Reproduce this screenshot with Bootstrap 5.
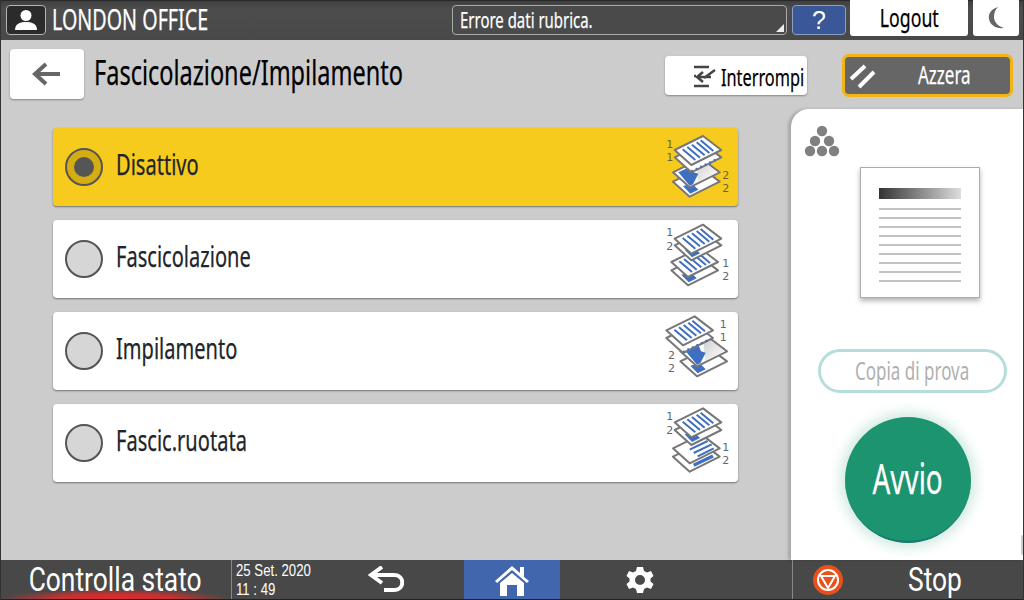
<!DOCTYPE html>
<html lang="it">
<head>
<meta charset="UTF-8">
<title>Fascicolazione/Impilamento</title>
<link href="https://cdn.jsdelivr.net/npm/bootstrap@5.3.0/dist/css/bootstrap.min.css" rel="stylesheet">
<style>
    html, body { margin: 0; background: #ccc; }
    body { font-family: "Noto Sans", "Liberation Sans", sans-serif; color: #000; }
    .screen { width: 1024px; height: 600px; overflow: hidden; background: #ccc; position: relative; }
    .screen::after { content: ""; position: absolute; inset: 0; pointer-events: none; box-shadow: inset 1px 0 #333, inset -1px 0 #333; }
    /* the printer panel font is a condensed face, squeeze Noto Sans to get there */
    .squeeze { display: inline-block; white-space: nowrap; transform: translateY(-1px) scaleX(.68); transform-origin: left center; line-height: 1; -webkit-text-stroke: .25px currentColor; }
    .squeeze-c { transform-origin: center center; }

    .top-bar { height: 40px; background: linear-gradient(#3f3f3f, #4d4d4d 20%, #484848); border-top: 1px solid #2a2a2a; padding-left: 6px; }
    .user-box { width: 40px; height: 30px; margin-top: 4px; background: #2b2b2b; border: 1px solid #b5b5b5; border-radius: 4px; }
    .office-name { width: 406px; padding-left: 6px; margin-top: 4px; font-size: 29px; color: #fff; }
    .msg-box { width: 335px; height: 30px; margin-top: 4px; background: #4a4a4a; border: 1px solid #aaa; border-radius: 4px; color: #fff; font-size: 22px; padding-left: 7px; position: relative; }
    .msg-corner { position: absolute; right: 2px; bottom: 2px; width: 0; height: 0; border-style: solid; border-width: 0 0 8px 8px; border-color: transparent transparent #eee transparent; }
    .help-box { width: 54px; height: 30px; margin: 4px 0 0 5px; background: #3a5797; border: 1px solid #8d9dbf; border-radius: 4px; color: #fff; font-family: "Liberation Sans", sans-serif; font-size: 25px; line-height: 28px; text-align: center; }
    .logout-box { width: 118px; height: 36px; margin-left: 4px; margin-top: -1px; background: #fff; border-radius: 0 0 3px 3px; font-size: 26px; }
    .moon-box { width: 46px; height: 36px; margin-left: 5px; margin-top: -1px; background: #fff; border-radius: 0 0 3px 3px; }

    .head-row { height: 69px; padding-left: 10px; position: relative; }
    .back-btn { width: 74px; height: 50px; margin-top: 9px; background: #fff; border-radius: 4px; box-shadow: 0 1px 2px rgba(0,0,0,.35); }
    .page-title { width: 400px; margin: 7px 0 0 10px; font-size: 34.6px; }
    .stop-job { width: 142px; height: 39px; margin-top: 16px; background: #fff; border-radius: 4px; box-shadow: 0 1px 2px rgba(0,0,0,.35); font-size: 24px; position: absolute; left: 665px; }
    .stop-job .squeeze { transform: translateY(1px) scaleX(.68); }
    .stop-icon { margin-left: 28px; }
    .reset-btn { width: 171px; height: 43px; margin-top: 14px; background: #666; border: 3px solid #f2b416; border-radius: 7px; color: #fff; font-size: 25px; position: absolute; left: 842px; }
    .reset-label { margin-left: 41px; }

    .body-row { height: 451px; }
    .option-col { width: 791px; padding: 19px 53px 0 53px; }
    .option-list { gap: 14px; }
    .option-row { height: 78px; background: #fff; border: 0; border-radius: 4px !important; box-shadow: 0 1px 2px rgba(0,0,0,.45); padding: 0 0 0 12px; font-size: 29.5px; }
    .option-row .squeeze { transform: translateY(-3px) scaleX(.68); }
    .option-row.picked { background: #f6cb1e; }
    .radio-dot { width: 38px; height: 38px; flex: none; margin-right: 13px; background: #d6d6d6; border: 2px solid #555; border-radius: 50%; }
    .picked .radio-dot { background: #d5ad12; }
    .radio-dot i { width: 20px; height: 20px; background: #555; border-radius: 50%; display: block; }
    .sheets { width: 75px; height: 78px; flex: none; }
    .sheets text { font-family: "DejaVu Sans", sans-serif; font-size: 33px; fill: #666; }
    .picked .sheets text { fill: #6f6430; }

    .side-panel { width: 233px; background: #fff; border-top-left-radius: 18px; box-shadow: -3px 0 3px rgba(0,0,0,.18); padding-top: 16px; }
    .toner { margin-left: 13px; display: block; }
    .paper { width: 120px; height: 131px; margin: 10px 0 0 69px; background: #fff; border: 1px solid #aaa; box-shadow: 0 3px 5px rgba(0,0,0,.3); padding: 20px 18px 0 18px; }
    .paper-band { height: 11px; background: linear-gradient(90deg, #333, #ddd); margin-bottom: 9px; }
    .paper-line { height: 2px; background: #c2c2c2; margin-bottom: 7px; }
    .trial-btn { width: 189px; height: 44px; margin: 51px 0 0 27px; border: 3px solid #b5dedb; border-radius: 22px; color: #b0b0b0; font-size: 25px; }
    .trial-btn .squeeze { -webkit-text-stroke: 0; }
    .start-btn { width: 126px; height: 126px; margin: 24px 0 0 54px; background: #1d9470; border-radius: 50%; border-bottom: 2px solid #177a70; box-shadow: 0 0 12px 5px rgba(29,148,112,.2); color: #fff; font-size: 41px; }
    .edge-notch { position: absolute; right: 0; top: 535px; width: 3px; height: 20px; background: #ccc; border-radius: 2px 0 0 2px; }

    .foot-bar { height: 40px; background: #484848; color: #fff; border-bottom: 1px solid #222; }
    .foot-bar .squeeze { -webkit-text-stroke: 0; }
    .foot-status { width: 231px; background: radial-gradient(ellipse 115px 10px at 50% 100%, #e5262b 0%, #c9302f 50%, rgba(72,72,72,0) 100%); }
    .foot-big { font-family: Roboto, "Noto Sans", sans-serif; font-size: 33px; }
    .foot-bar .foot-big .squeeze { transform: scaleX(.8); }
    .foot-date { width: 118px; padding-left: 4px; border-left: 1px solid #888; font-family: "Liberation Sans", sans-serif; font-size: 16.5px; }
    .foot-bar .foot-date span { height: 19px; line-height: 19px; transform: scaleX(.8); }
    .foot-back { width: 115px; padding-right: 42px; }
    .foot-home { width: 96px; background: #4166ad; }
    .foot-gear { width: 232px; padding-right: 72px; }
    .foot-stop { width: 232px; border-left: 1px solid #888; padding-left: 20px; }
    .stop-label { margin-left: 65px; }
</style>
</head>
<body>
<svg width="0" height="0" class="position-absolute">
    <defs>
        <linearGradient id="sheetShade" x1="0" y1="0" x2="1" y2="1">
            <stop offset="0" stop-color="#cfcfcf"/><stop offset="1" stop-color="#fff"/>
        </linearGradient>
        <!-- one sheet of paper in the stack icons, drawn at 3x -->
        <polygon id="sheetBase" points="0,42 85,0 140,42 50,87" fill="#fff" stroke="#777" stroke-width="6" stroke-linejoin="round"/>
        <g id="sheetLines">
            <use href="#sheetBase"/>
            <path d="M24,40 L62,72 M38,33 L76,65 M52,26 L90,58 M66,19 L104,51 M78,13 L116,45" stroke="#3f6fc0" stroke-width="6" fill="none"/>
        </g>
        <g id="sheetDots">
            <use href="#sheetBase"/>
            <path d="M50,84 L130,46" stroke="#3f6fc0" stroke-width="7" stroke-dasharray="5 10" fill="none"/>
        </g>
        <g id="sheetCorner">
            <use href="#sheetBase"/>
            <path d="M70,20 L85,5 L134,42 L74,70 Z" fill="url(#sheetShade)"/>
            <path d="M16,42 L55,24 L62,42 L76,46 L60,78 L50,82 Z" fill="#3f6fc0"/>
        </g>
        <g id="sheetLow">
            <use href="#sheetBase"/>
            <path d="M30,55 L52,78 L76,66 L58,48 Z" fill="#3f6fc0"/>
        </g>
        <g id="sheetTurned">
            <use href="#sheetBase"/>
            <path d="M50,46 L104,20 M62,56 L116,30 M74,66 L122,42" stroke="#3f6fc0" stroke-width="6" fill="none"/>
        </g>
        <g id="sheetTurnedLow">
            <use href="#sheetBase"/>
            <path d="M62,68 L120,40" stroke="#3f6fc0" stroke-width="10" fill="none"/>
        </g>
    </defs>
</svg>

<div class="screen">
    <div class="top-bar d-flex align-items-start">
        <div class="user-box d-flex align-items-center justify-content-center">
            <svg width="26" height="22" viewBox="0 0 26 22"><circle cx="13" cy="6.5" r="5.5" fill="#fff"/><path d="M2,21 C2,14 8,13 13,13 C18,13 24,14 24,21 Z" fill="#fff"/></svg>
        </div>
        <div class="office-name d-flex align-items-center"><span class="squeeze">LONDON OFFICE</span></div>
        <div class="msg-box d-flex align-items-center"><span class="squeeze">Errore dati rubrica.</span><span class="msg-corner"></span></div>
        <div class="help-box">?</div>
        <div class="logout-box d-flex align-items-center justify-content-center"><span class="squeeze squeeze-c">Logout</span></div>
        <div class="moon-box d-flex align-items-center justify-content-center">
            <svg width="20" height="26" viewBox="0 0 20 24"><path d="M12,1 C5,3 2,8 3,13 C4,19 10,23 18,22 C11,20 8,15 8,11 C8,7 9,4 12,1 Z" fill="#666"/></svg>
        </div>
    </div>

    <div class="head-row d-flex align-items-start">
        <div class="back-btn d-flex align-items-center justify-content-center">
            <svg width="30" height="24" viewBox="0 0 30 24"><path d="M28,12 H4 M14,2 L3,12 L14,22" stroke="#666" stroke-width="4" fill="none"/></svg>
        </div>
        <div class="page-title"><span class="squeeze">Fascicolazione/Impilamento</span></div>
        <div class="stop-job d-flex align-items-center">
            <svg class="stop-icon flex-shrink-0" width="24" height="24" viewBox="0 0 24 24"><path d="M1,3 H16 M1,22 H16 M1,12 H3" stroke="#444" stroke-width="2.5" fill="none"/><path d="M22,6 L11,14 M4,13 H18 M10,8 L4,13 L10,18" stroke="#444" stroke-width="2.5" fill="none"/></svg>
            <span class="squeeze ms-1">Interrompi</span>
        </div>
        <div class="reset-btn d-flex align-items-center">
            <svg class="ms-1 flex-shrink-0" width="28" height="26" viewBox="0 0 28 26"><path d="M2,16 L16,3 M10,24 L25,9" stroke="#fff" stroke-width="4" fill="none"/></svg>
            <span class="squeeze reset-label">Azzera</span>
        </div>
    </div>

    <div class="body-row d-flex">
        <div class="option-col">
            <div class="list-group option-list">
                <div class="list-group-item option-row picked d-flex align-items-center">
                    <span class="radio-dot d-flex align-items-center justify-content-center"><i></i></span>
                    <span class="squeeze flex-grow-1">Disattivo</span>
                    <svg class="sheets" viewBox="40 9 225 234">
                        <use href="#sheetLow" x="70" y="128"/><use href="#sheetCorner" x="70" y="100"/>
                        <use href="#sheetDots" x="75" y="55"/><use href="#sheetLines" x="75" y="33"/>
                        <text x="50" y="68">1</text><text x="50" y="108">1</text><text x="218" y="162">2</text><text x="218" y="202">2</text>
                    </svg>
                </div>
                <div class="list-group-item option-row d-flex align-items-center">
                    <span class="radio-dot"></span>
                    <span class="squeeze flex-grow-1">Fascicolazione</span>
                    <svg class="sheets" viewBox="40 9 225 234">
                        <use href="#sheetLow" x="65" y="118"/><use href="#sheetLines" x="65" y="93"/>
                        <use href="#sheetLow" x="75" y="43"/><use href="#sheetLines" x="75" y="23"/>
                        <text x="50" y="58">1</text><text x="50" y="98">2</text><text x="218" y="150">1</text><text x="218" y="190">2</text>
                    </svg>
                </div>
                <div class="list-group-item option-row d-flex align-items-center">
                    <span class="radio-dot"></span>
                    <span class="squeeze flex-grow-1">Impilamento</span>
                    <svg class="sheets" viewBox="40 9 225 234">
                        <use href="#sheetLow" x="92" y="115"/><use href="#sheetCorner" x="92" y="85"/>
                        <use href="#sheetDots" x="50" y="45"/><use href="#sheetLines" x="50" y="22"/>
                        <text x="210" y="56">1</text><text x="210" y="96">1</text><text x="55" y="150">2</text><text x="55" y="190">2</text>
                    </svg>
                </div>
                <div class="list-group-item option-row d-flex align-items-center">
                    <span class="radio-dot"></span>
                    <span class="squeeze flex-grow-1">Fascic.ruotata</span>
                    <svg class="sheets" viewBox="40 9 225 234">
                        <use href="#sheetTurnedLow" x="70" y="125"/><use href="#sheetTurned" x="70" y="100"/>
                        <use href="#sheetLow" x="75" y="45"/><use href="#sheetLines" x="75" y="22"/>
                        <text x="50" y="58">1</text><text x="50" y="98">2</text><text x="218" y="150">1</text><text x="218" y="190">2</text>
                    </svg>
                </div>
            </div>
        </div>

        <div class="side-panel">
            <svg class="toner" width="36" height="32" viewBox="0 0 36 32" fill="#808080">
                <circle cx="18" cy="6" r="5.2"/><circle cx="11" cy="16" r="5.2"/><circle cx="25" cy="16" r="5.2"/>
                <circle cx="6" cy="26" r="5.2"/><circle cx="18" cy="26" r="5.2"/><circle cx="30" cy="26" r="5.2"/>
            </svg>
            <div class="paper">
                <div class="paper-band"></div>
                <div class="paper-line"></div><div class="paper-line"></div><div class="paper-line"></div>
                <div class="paper-line"></div><div class="paper-line"></div><div class="paper-line"></div>
                <div class="paper-line"></div><div class="paper-line"></div><div class="paper-line"></div>
            </div>
            <div class="trial-btn d-flex align-items-center justify-content-center"><span class="squeeze squeeze-c">Copia di prova</span></div>
            <div class="start-btn d-flex align-items-center justify-content-center"><span class="squeeze squeeze-c">Avvio</span></div>
        </div>
    </div>
    <div class="edge-notch"></div>

    <div class="foot-bar d-flex">
        <div class="foot-status foot-big d-flex align-items-center justify-content-center"><span class="squeeze squeeze-c">Controlla stato</span></div>
        <div class="foot-date d-flex flex-column justify-content-center"><span class="squeeze">25 Set. 2020</span><span class="squeeze">11 : 49</span></div>
        <div class="foot-back d-flex align-items-center justify-content-center">
            <svg width="36" height="28" viewBox="0 0 36 28"><path d="M3,9 H26 C37,9 37,24 26,24 H16 M14,1 L3,9 L14,17" stroke="#fff" stroke-width="4" fill="none"/></svg>
        </div>
        <div class="foot-home d-flex align-items-center justify-content-center">
            <svg width="36" height="32" viewBox="0 0 36 32"><path d="M1,17 L18,2 L26,9 V3 H30 V13 L35,17 L33,19 L18,6 L3,19 Z" fill="#fff"/><path d="M6,19 L18,9 L30,19 V32 H23 V21 H13 V32 H6 Z" fill="#fff"/></svg>
        </div>
        <div class="foot-gear d-flex align-items-center justify-content-center">
            <svg width="28" height="28" viewBox="0 0 28 28"><path fill="#fff" fill-rule="evenodd" d="M11,1 H17 L18,5 L21,6.5 L25,5 L27.5,10 L24.5,12.5 V15.5 L27.5,18 L25,23 L21,21.5 L18,23 L17,27 H11 L10,23 L7,21.5 L3,23 L0.5,18 L3.5,15.5 V12.5 L0.5,10 L3,5 L7,6.5 L10,5 Z M14,9 A5,5 0 1 0 14,19 A5,5 0 1 0 14,9 Z"/></svg>
        </div>
        <div class="foot-stop foot-big d-flex align-items-center">
            <svg class="flex-shrink-0" width="30" height="30" viewBox="0 0 30 30"><circle cx="15" cy="15" r="15" fill="#e8501c"/><circle cx="15" cy="15" r="10" fill="none" stroke="#fff" stroke-width="2"/><path d="M8,11 H22 L15,23 Z" fill="none" stroke="#fff" stroke-width="2"/></svg>
            <span class="squeeze stop-label">Stop</span>
        </div>
    </div>
</div>
<script src="https://cdn.jsdelivr.net/npm/bootstrap@5.3.0/dist/js/bootstrap.bundle.min.js"></script>
</body>
</html>
